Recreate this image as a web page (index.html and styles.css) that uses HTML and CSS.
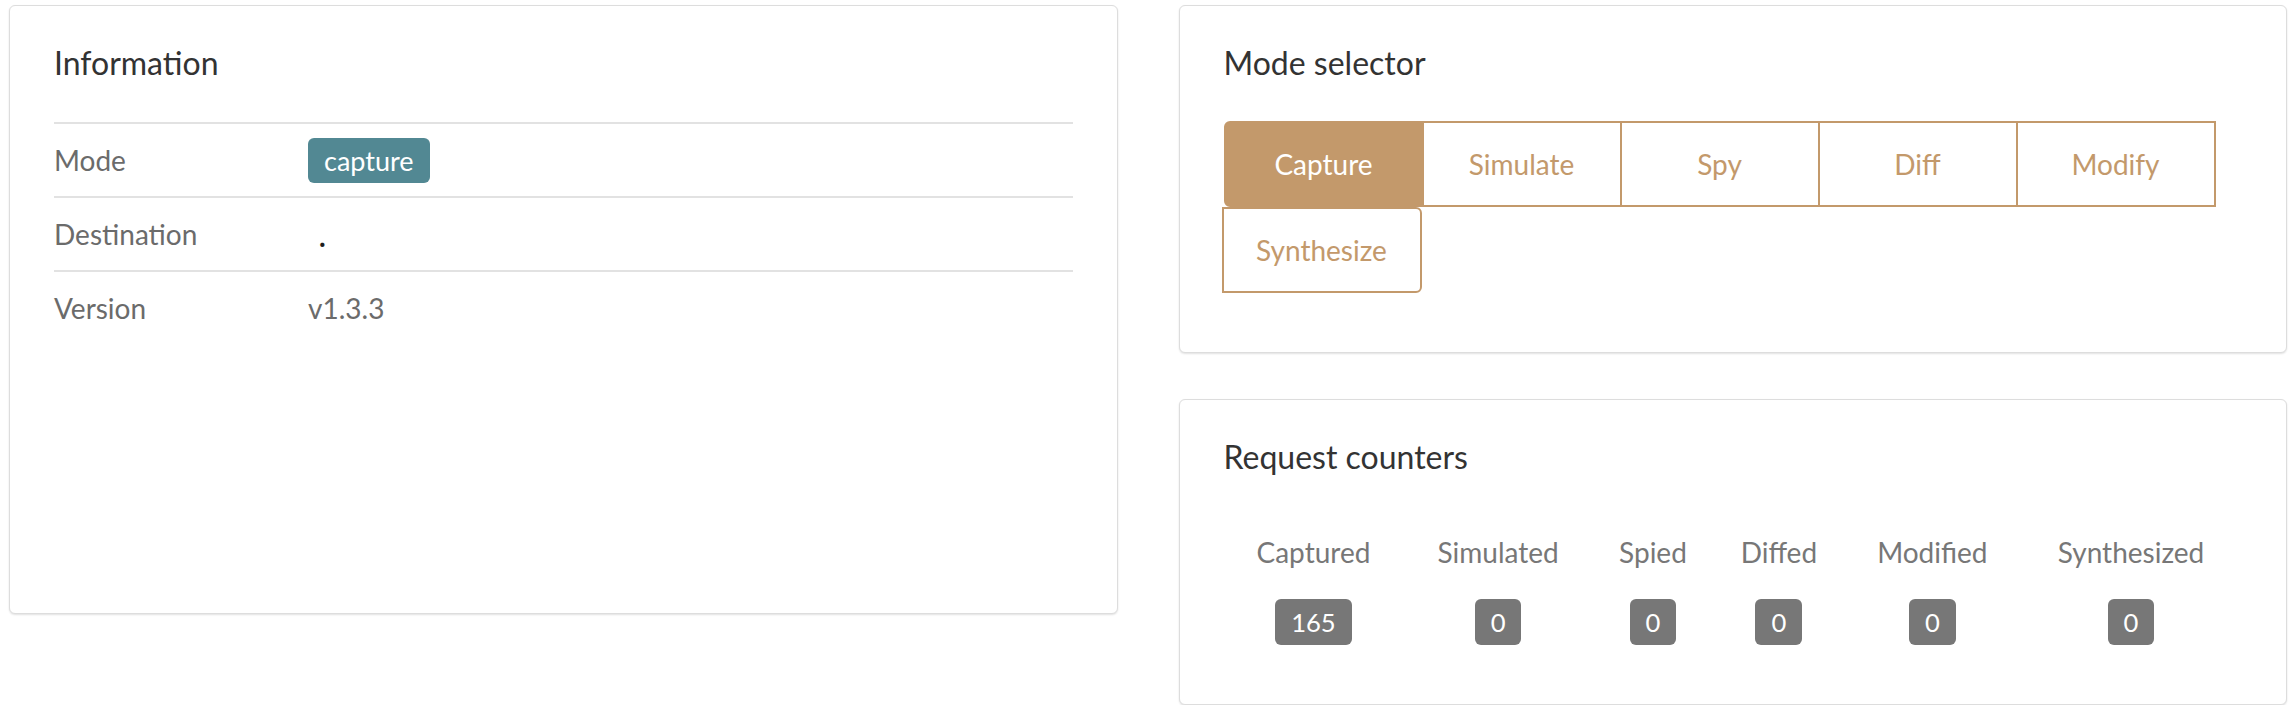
FILE: index.html
```html
<!DOCTYPE html>
<html lang="en">
<head>
<meta charset="utf-8">
<title>Dashboard</title>
<link rel="stylesheet" href="styles.css">
</head>
<body>
<div class="page">
  <section class="card card-info">
    <h2 class="card-title">Information</h2>
    <div class="info-table">
      <div class="info-row">
        <div class="info-label">Mode</div>
        <div class="info-value"><span class="badge badge-teal">capture</span></div>
      </div>
      <div class="info-row">
        <div class="info-label">Destination</div>
        <div class="info-value"><span class="dest">.</span></div>
      </div>
      <div class="info-row">
        <div class="info-label">Version</div>
        <div class="info-value">v1.3.3</div>
      </div>
    </div>
  </section>

  <div class="right-col">
    <section class="card card-mode">
      <h2 class="card-title">Mode selector</h2>
      <div class="btn-group">
        <button class="mode-btn active first">Capture</button>
        <button class="mode-btn">Simulate</button>
        <button class="mode-btn">Spy</button>
        <button class="mode-btn">Diff</button>
        <button class="mode-btn">Modify</button>
        <button class="mode-btn last">Synthesize</button>
      </div>
    </section>

    <section class="card card-counters">
      <h2 class="card-title">Request counters</h2>
      <table class="counters">
        <thead>
          <tr>
            <th>Captured</th>
            <th>Simulated</th>
            <th>Spied</th>
            <th>Diffed</th>
            <th>Modified</th>
            <th>Synthesized</th>
          </tr>
        </thead>
        <tbody>
          <tr>
            <td><span class="badge badge-gray">165</span></td>
            <td><span class="badge badge-gray">0</span></td>
            <td><span class="badge badge-gray">0</span></td>
            <td><span class="badge badge-gray">0</span></td>
            <td><span class="badge badge-gray">0</span></td>
            <td><span class="badge badge-gray">0</span></td>
          </tr>
        </tbody>
      </table>
    </section>
  </div>
</div>
</body>
</html>
```

FILE: styles.css
```css
* {
  box-sizing: border-box;
}

html, body {
  margin: 0;
  padding: 0;
  background: #ffffff;
}

body {
  font-family: Lato, "Open Sans", "Liberation Sans", sans-serif;
  font-size: 28px;
  color: #333333;
}

.page {
  display: grid;
  grid-template-columns: 1fr 1fr;
  column-gap: 61px;
  align-items: start;
  padding: 5px 9px 0 9px;
}

.card {
  background: #ffffff;
  border: 1px solid #dddddd;
  border-radius: 6px;
  box-shadow: 0 1px 2px rgba(0, 0, 0, 0.12);
  padding: 37.5px 44px 36px 44px;
}

.card-title {
  margin: 0;
  font-size: 32px;
  font-weight: 400;
  line-height: 38.4px;
  color: #333333;
}

/* Information card */
.card-info {
  height: 609px;
}

.info-table {
  margin-top: 40.5px;
  display: flex;
  flex-direction: column;
}

.info-row {
  display: grid;
  grid-template-columns: 254px 1fr;
  align-items: center;
  height: 74px;
  border-top: 2px solid #e2e2e2;
  color: #6b6b6b;
  font-size: 28px;
}

.info-label,
.info-value {
  line-height: 36px;
}

.dest {
  display: inline-block;
  padding-left: 11px;
  color: #1e1e1e;
  font-weight: 700;
  transform: translateY(2px);
}

.badge {
  display: inline-block;
  padding: 0 16px;
  height: 46px;
  line-height: 46px;
  border-radius: 6px;
  color: #ffffff;
  font-size: 25.6px;
  vertical-align: top;
  text-align: center;
}

.badge-teal {
  background: #528893;
  height: 45px;
  line-height: 45px;
  font-size: 27px;
  vertical-align: middle;
}

.badge-gray {
  background: #777777;
}

/* Right column */
.right-col {
  display: flex;
  flex-direction: column;
  gap: 46px;
}

.card-mode {
  height: 348px;
}

.btn-group {
  margin-top: 39.5px;
  display: flex;
  flex-wrap: wrap;
}

.mode-btn {
  width: 200px;
  height: 86px;
  margin: 0 0 0 -2px;
  padding: 0;
  font-family: inherit;
  font-size: 28px;
  color: #c3996b;
  background: #ffffff;
  border: 2px solid #c3996b;
  border-radius: 0;
  cursor: pointer;
}

.mode-btn.first {
  margin-left: 0;
  border-radius: 6px 0 0 6px;
}

.mode-btn.last {
  border-radius: 0 6px 6px 0;
}

.mode-btn.active {
  background: #c3996b;
  color: #ffffff;
}

/* Counters card */
.card-counters {
  height: 306px;
}

.counters {
  width: 100%;
  margin-top: 60px;
  border-collapse: collapse;
}

.counters th,
.counters td {
  padding: 0 12.8px;
  text-align: center;
}

.counters th {
  font-size: 28px;
  font-weight: 400;
  line-height: 33.6px;
  color: #777777;
  padding-bottom: 29px;
  white-space: nowrap;
}

.counters td {
  line-height: 46px;
  height: 46px;
}
```
